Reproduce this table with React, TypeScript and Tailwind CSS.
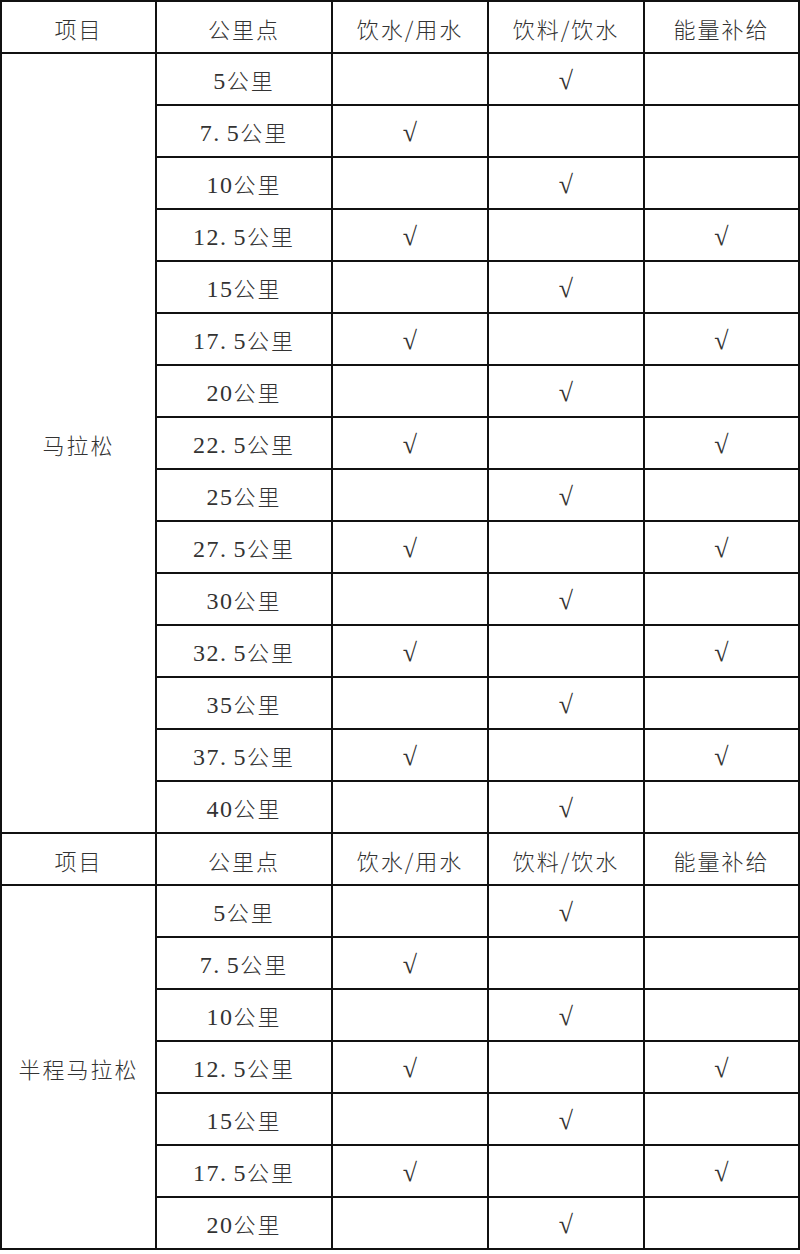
const headers = ['项目', '公里点', '饮水/用水', '饮料/饮水', '能量补给']

const marathonKm = ['5', '7.5', '10', '12.5', '15', '17.5', '20', '22.5', '25', '27.5', '30', '32.5', '35', '37.5', '40']
const halfKm = ['5', '7.5', '10', '12.5', '15', '17.5', '20']

const cell = 'border-2 border-[#111] text-center align-middle p-0 pt-[3px]'
const cjk = "font-['Noto_Sans_CJK_SC',sans-serif] font-light tracking-[2px]"

function Check() {
  return <span className="font-['Liberation_Serif',serif] text-[26px] leading-none text-[#333]">√</span>
}

function HeaderRow() {
  return (
    <tr className="h-[52px]">
      {headers.map((h) => (
        <td key={h} className={`${cell} ${cjk}`}>
          {h}
        </td>
      ))}
    </tr>
  )
}

function KmLabel({ km }: { km: string }) {
  const [whole, frac] = km.split('.')
  return (
    <span className="whitespace-nowrap">
      <span className="font-['Liberation_Serif',serif] text-[24px] tracking-[1.5px]">
        {whole}
        {frac && (
          <>
            <span className="mr-[6px]">.</span>
            {frac}
          </>
        )}
      </span>
      <span className={cjk}>公里</span>
    </span>
  )
}

function Section({ name, kms }: { name: string; kms: string[] }) {
  return (
    <>
      <HeaderRow />
      {kms.map((km, i) => {
        const half = km.includes('.')
        const water = half
        const drink = !half
        const energy = half && km !== '7.5'
        return (
          <tr key={km} className="h-[52px]">
            {i === 0 && (
              <td rowSpan={kms.length} className={`${cell} ${cjk}`}>
                {name}
              </td>
            )}
            <td className={cell}>
              <KmLabel km={km} />
            </td>
            <td className={cell}>{water && <Check />}</td>
            <td className={cell}>{drink && <Check />}</td>
            <td className={cell}>{energy && <Check />}</td>
          </tr>
        )
      })}
    </>
  )
}

export default function App() {
  return (
    <div className="bg-white w-[800px] min-h-[1254px] text-[22px] text-[#333]">
      <table className="border-collapse table-fixed w-[798px]">
        <colgroup>
          <col className="w-[155px]" />
          <col className="w-[176px]" />
          <col className="w-[156px]" />
          <col className="w-[156px]" />
          <col className="w-[155px]" />
        </colgroup>
        <tbody>
          <Section name="马拉松" kms={marathonKm} />
          <Section name="半程马拉松" kms={halfKm} />
        </tbody>
      </table>
    </div>
  )
}
